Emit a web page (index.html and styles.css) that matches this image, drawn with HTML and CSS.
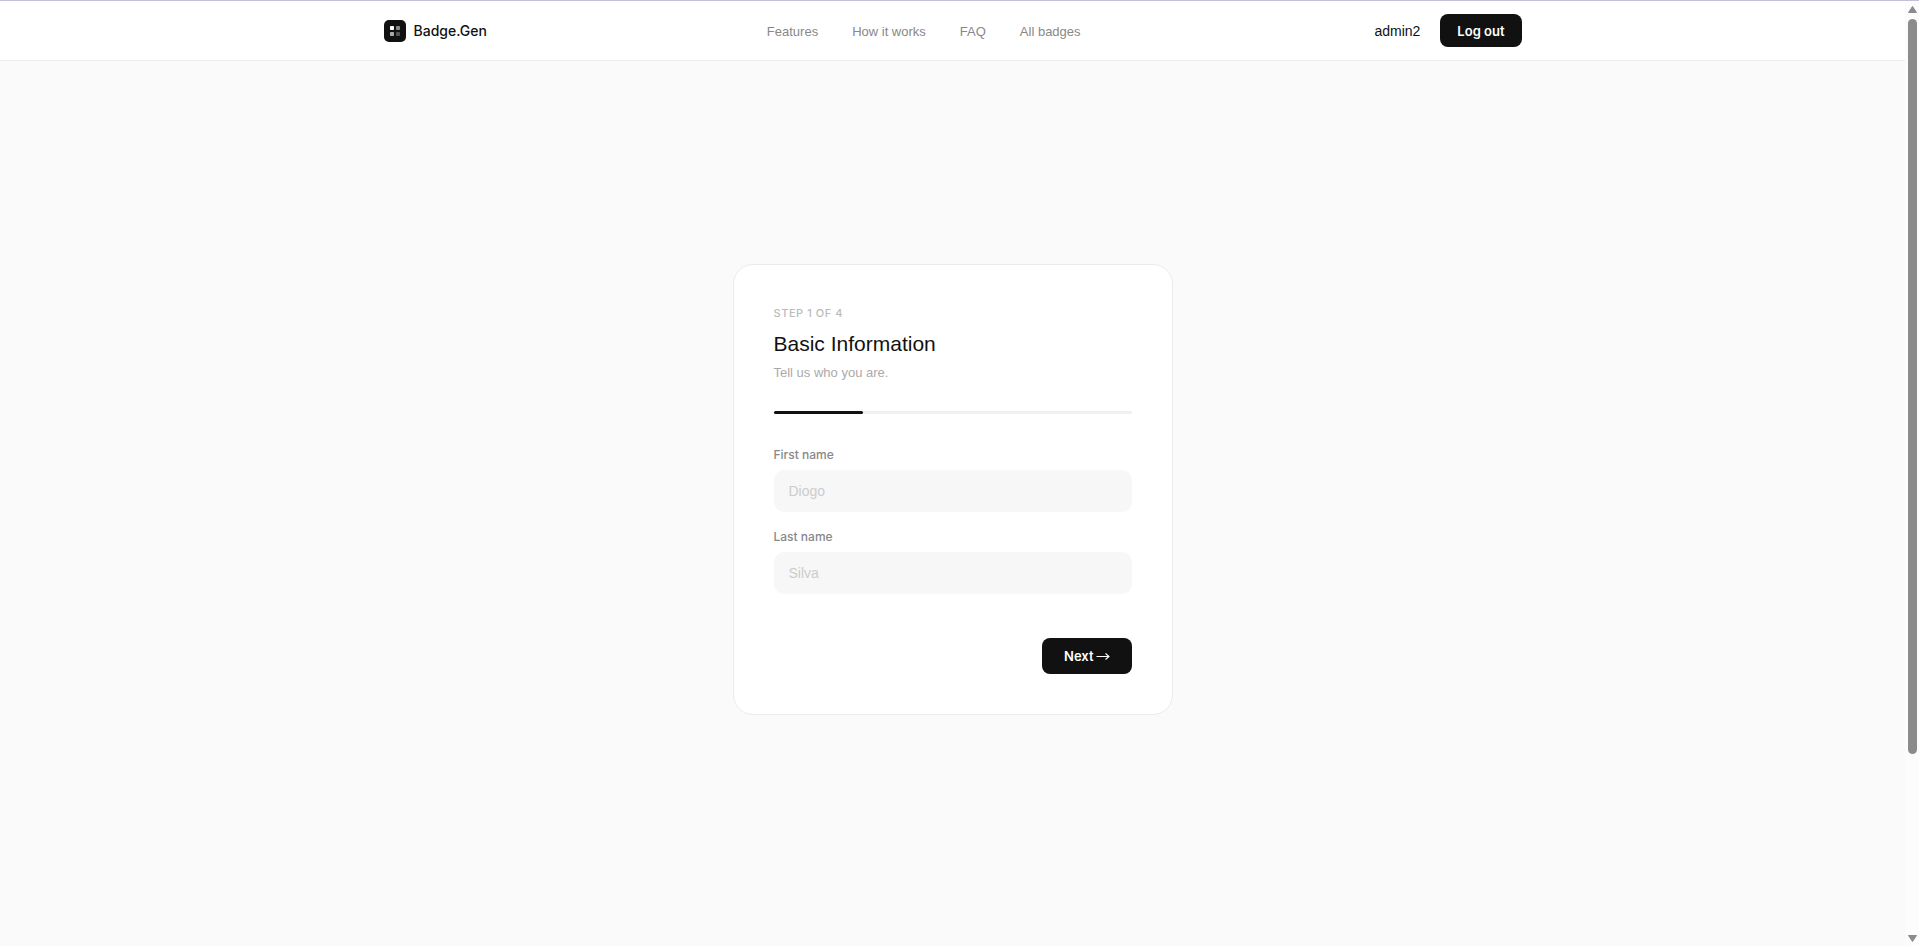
FILE: index.html
```html
<!DOCTYPE html>
<html lang="en">
<head>
<meta charset="utf-8">
<meta name="viewport" content="width=device-width, initial-scale=1">
<title>Badge.Gen</title>
<link rel="stylesheet" href="styles.css">
</head>
<body>
<div class="page">
  <header class="header">
    <div class="header-inner">
      <a class="brand" href="#">
        <svg class="brand-mark" viewBox="0 0 22 22" aria-hidden="true">
          <rect width="22" height="22" rx="5" fill="#111"/>
          <rect x="6" y="6" width="4" height="4" rx="0.8" fill="#fff"/>
          <rect x="12" y="6" width="4" height="4" rx="0.8" fill="#888"/>
          <rect x="6" y="12" width="4" height="4" rx="0.8" fill="#aaa"/>
          <rect x="12" y="12" width="4" height="4" rx="0.8" fill="#555"/>
        </svg>
        <span>Badge.Gen</span>
      </a>
      <nav class="nav">
        <a href="#">Features</a>
        <a href="#">How it works</a>
        <a href="#">FAQ</a>
        <a href="#">All badges</a>
      </nav>
      <div class="account">
        <a class="user" href="#">admin2</a>
        <button class="button button-small" type="button">Log out</button>
      </div>
    </div>
  </header>
  <main class="main">
    <form class="card">
      <p class="step">Step 1 of 4</p>
      <h1 class="title">Basic Information</h1>
      <p class="subtitle">Tell us who you are.</p>
      <div class="progress"><div class="progress-fill"></div></div>
      <div class="fields">
        <div class="field">
          <label for="first-name">First name</label>
          <input id="first-name" type="text" placeholder="Diogo">
        </div>
        <div class="field">
          <label for="last-name">Last name</label>
          <input id="last-name" type="text" placeholder="Silva">
        </div>
      </div>
      <div class="actions">
        <button class="button" type="button">Next
          <svg class="arrow" viewBox="0 0 14 10" aria-hidden="true"><path d="M0.5 5.5H13M9.5 2.5L13 5.5L9.5 8.5" fill="none" stroke="currentColor" stroke-width="1.1"/></svg>
        </button>
      </div>
    </form>
  </main>
</div>
<div class="scrollbar" aria-hidden="true">
  <svg class="scroll-arrow" viewBox="0 0 9 7"><path d="M4.5 0.5L8.5 6.5H0.5Z" fill="#8b8b8b" stroke="#8b8b8b" stroke-linejoin="round"/></svg>
  <div class="scroll-track"><div class="scroll-thumb"></div></div>
  <svg class="scroll-arrow" viewBox="0 0 9 7"><path d="M4.5 6.5L8.5 0.5H0.5Z" fill="#8b8b8b" stroke="#8b8b8b" stroke-linejoin="round"/></svg>
</div>
</body>
</html>
```
FILE: styles.css
```css
* {
  box-sizing: border-box;
}

body {
  display: flex;
  margin: 0;
  height: 100vh;
  overflow: hidden;
  border-top: 1px solid #c4c0d8;
  background: #fafafa;
  color: #111;
  font-family: "Liberation Sans", Arial, sans-serif;
  font-size: 13px;
  line-height: 20px;
}

a {
  color: inherit;
  text-decoration: none;
}

.brand,
.button,
.step,
.field label {
  font-family: Inter, "Liberation Sans", sans-serif;
}

.page {
  flex: 1;
}

.header {
  background: #fff;
  border-bottom: 1px solid #ebebeb;
}

.header-inner {
  display: flex;
  align-items: center;
  justify-content: space-between;
  max-width: 1202px;
  height: 59px;
  margin: 0 auto;
  padding: 0 32px;
}

.brand {
  display: flex;
  align-items: center;
  gap: 8px;
  font-size: 14px;
  font-weight: 500;
}

.brand-mark {
  width: 22px;
  height: 22px;
}

.nav {
  display: flex;
  gap: 34px;
  padding-top: 2px;
  color: #888;
}

.account {
  display: flex;
  align-items: center;
  gap: 20px;
  padding-left: 14px;
}

.user {
  font-size: 14px;
}

.button {
  display: flex;
  align-items: center;
  gap: 2px;
  padding: 8px 22px;
  border: 0;
  border-radius: 8px;
  background: #111;
  color: #fff;
  font-size: 13px;
  font-weight: 600;
  line-height: 20px;
}

.button-small {
  height: 33px;
  padding: 0 17px;
}

.main {
  display: flex;
  align-items: center;
  justify-content: center;
  min-height: calc(100vh - 90px);
}

.card {
  width: 440px;
  padding: 40px;
  border: 1px solid #ebebeb;
  border-radius: 20px;
  background: #fff;
}

.step,
.title,
.subtitle {
  margin: 0;
}

.step {
  margin-bottom: 9px;
  color: #bbb;
  font-size: 11px;
  font-weight: 500;
  line-height: 16px;
  letter-spacing: 0.05em;
  text-transform: uppercase;
}

.title {
  margin-bottom: 5px;
  font-size: 21px;
  font-weight: 400;
  line-height: 28px;
}

.subtitle {
  color: #aaa;
}

.progress {
  height: 3px;
  margin: 28px 0 32px;
  border-radius: 2px;
  background: #f0f0f0;
}

.progress-fill {
  width: 25%;
  height: 100%;
  border-radius: 2px;
  background: #111;
}

.fields {
  display: grid;
  gap: 16px;
}

.field {
  display: grid;
  gap: 6px;
}

.field label {
  color: #888;
  font-size: 12px;
  font-weight: 500;
  line-height: 18px;
}

.field input {
  width: 100%;
  height: 42px;
  padding: 0 15px;
  border: 0;
  border-radius: 10px;
  background: #f7f7f7;
  color: #111;
  font: inherit;
  font-size: 14px;
}

.field input::placeholder {
  color: #ccc;
}

.actions {
  display: flex;
  justify-content: flex-end;
  margin-top: 44px;
}

.arrow {
  width: 14px;
  height: 10px;
}

.scrollbar {
  display: flex;
  flex-direction: column;
  align-items: center;
  gap: 6px;
  width: 14px;
  padding: 5px 0 4px;
  background: #fcfcfc;
}

.scroll-arrow {
  width: 9px;
  height: 7px;
}

.scroll-track {
  flex: 1;
  width: 9px;
}

.scroll-thumb {
  height: 80.8%;
  border-radius: 5px;
  background: #8b8b8b;
}
```
